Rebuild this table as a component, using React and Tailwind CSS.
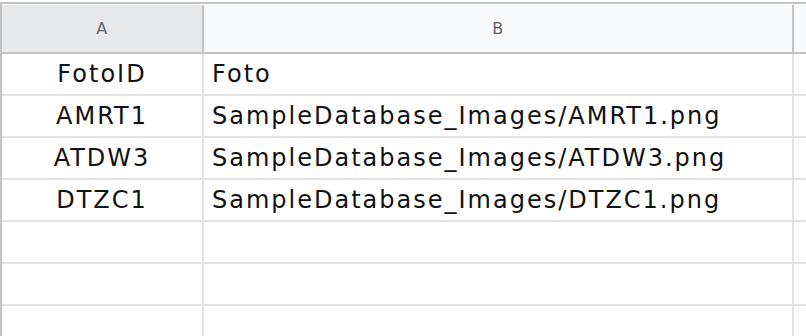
import React from "react";

const rows = [
  ["FotoID", "Foto"],
  ["AMRT1", "SampleDatabase_Images/AMRT1.png"],
  ["ATDW3", "SampleDatabase_Images/ATDW3.png"],
  ["DTZC1", "SampleDatabase_Images/DTZC1.png"],
  ["", ""],
  ["", ""],
  ["", ""],
];

export default function App() {
  return (
    <div className="w-[806px] h-[336px] overflow-hidden bg-white pt-[2px] font-['DejaVu_Sans',sans-serif]">
      <div className="border-t-2 border-l-2 border-[#c3c3c3] pt-px">
        {/* column headers */}
        <div className="flex h-[49px] border-b-2 border-[#c3c3c3] text-[16px] tracking-[0.5px] text-[#5f6368]">
          <div className="w-[202px] shrink-0 flex items-center justify-center bg-[#e8e9eb] border-r-2 border-[#c3c3c3]">
            A
          </div>
          <div className="w-[590px] shrink-0 flex items-center justify-center bg-[#f8f9fa] border-r-2 border-[#c3c3c3]">
            B
          </div>
          <div className="flex-1 bg-[#f8f9fa]" />
        </div>
        {/* data rows */}
        {rows.map(([id, path], i) => (
          <div key={i} className="flex h-[42px] border-b-2 border-[#e2e2e2] text-[24px] tracking-[2px] text-[#111]">
            <div className="w-[202px] shrink-0 flex items-center justify-center border-r-2 border-[#e2e2e2]">
              {id}
            </div>
            <div className="w-[590px] shrink-0 flex items-center pl-[8px] border-r-2 border-[#e2e2e2]">
              {path}
            </div>
            <div className="flex-1" />
          </div>
        ))}
      </div>
    </div>
  );
}
